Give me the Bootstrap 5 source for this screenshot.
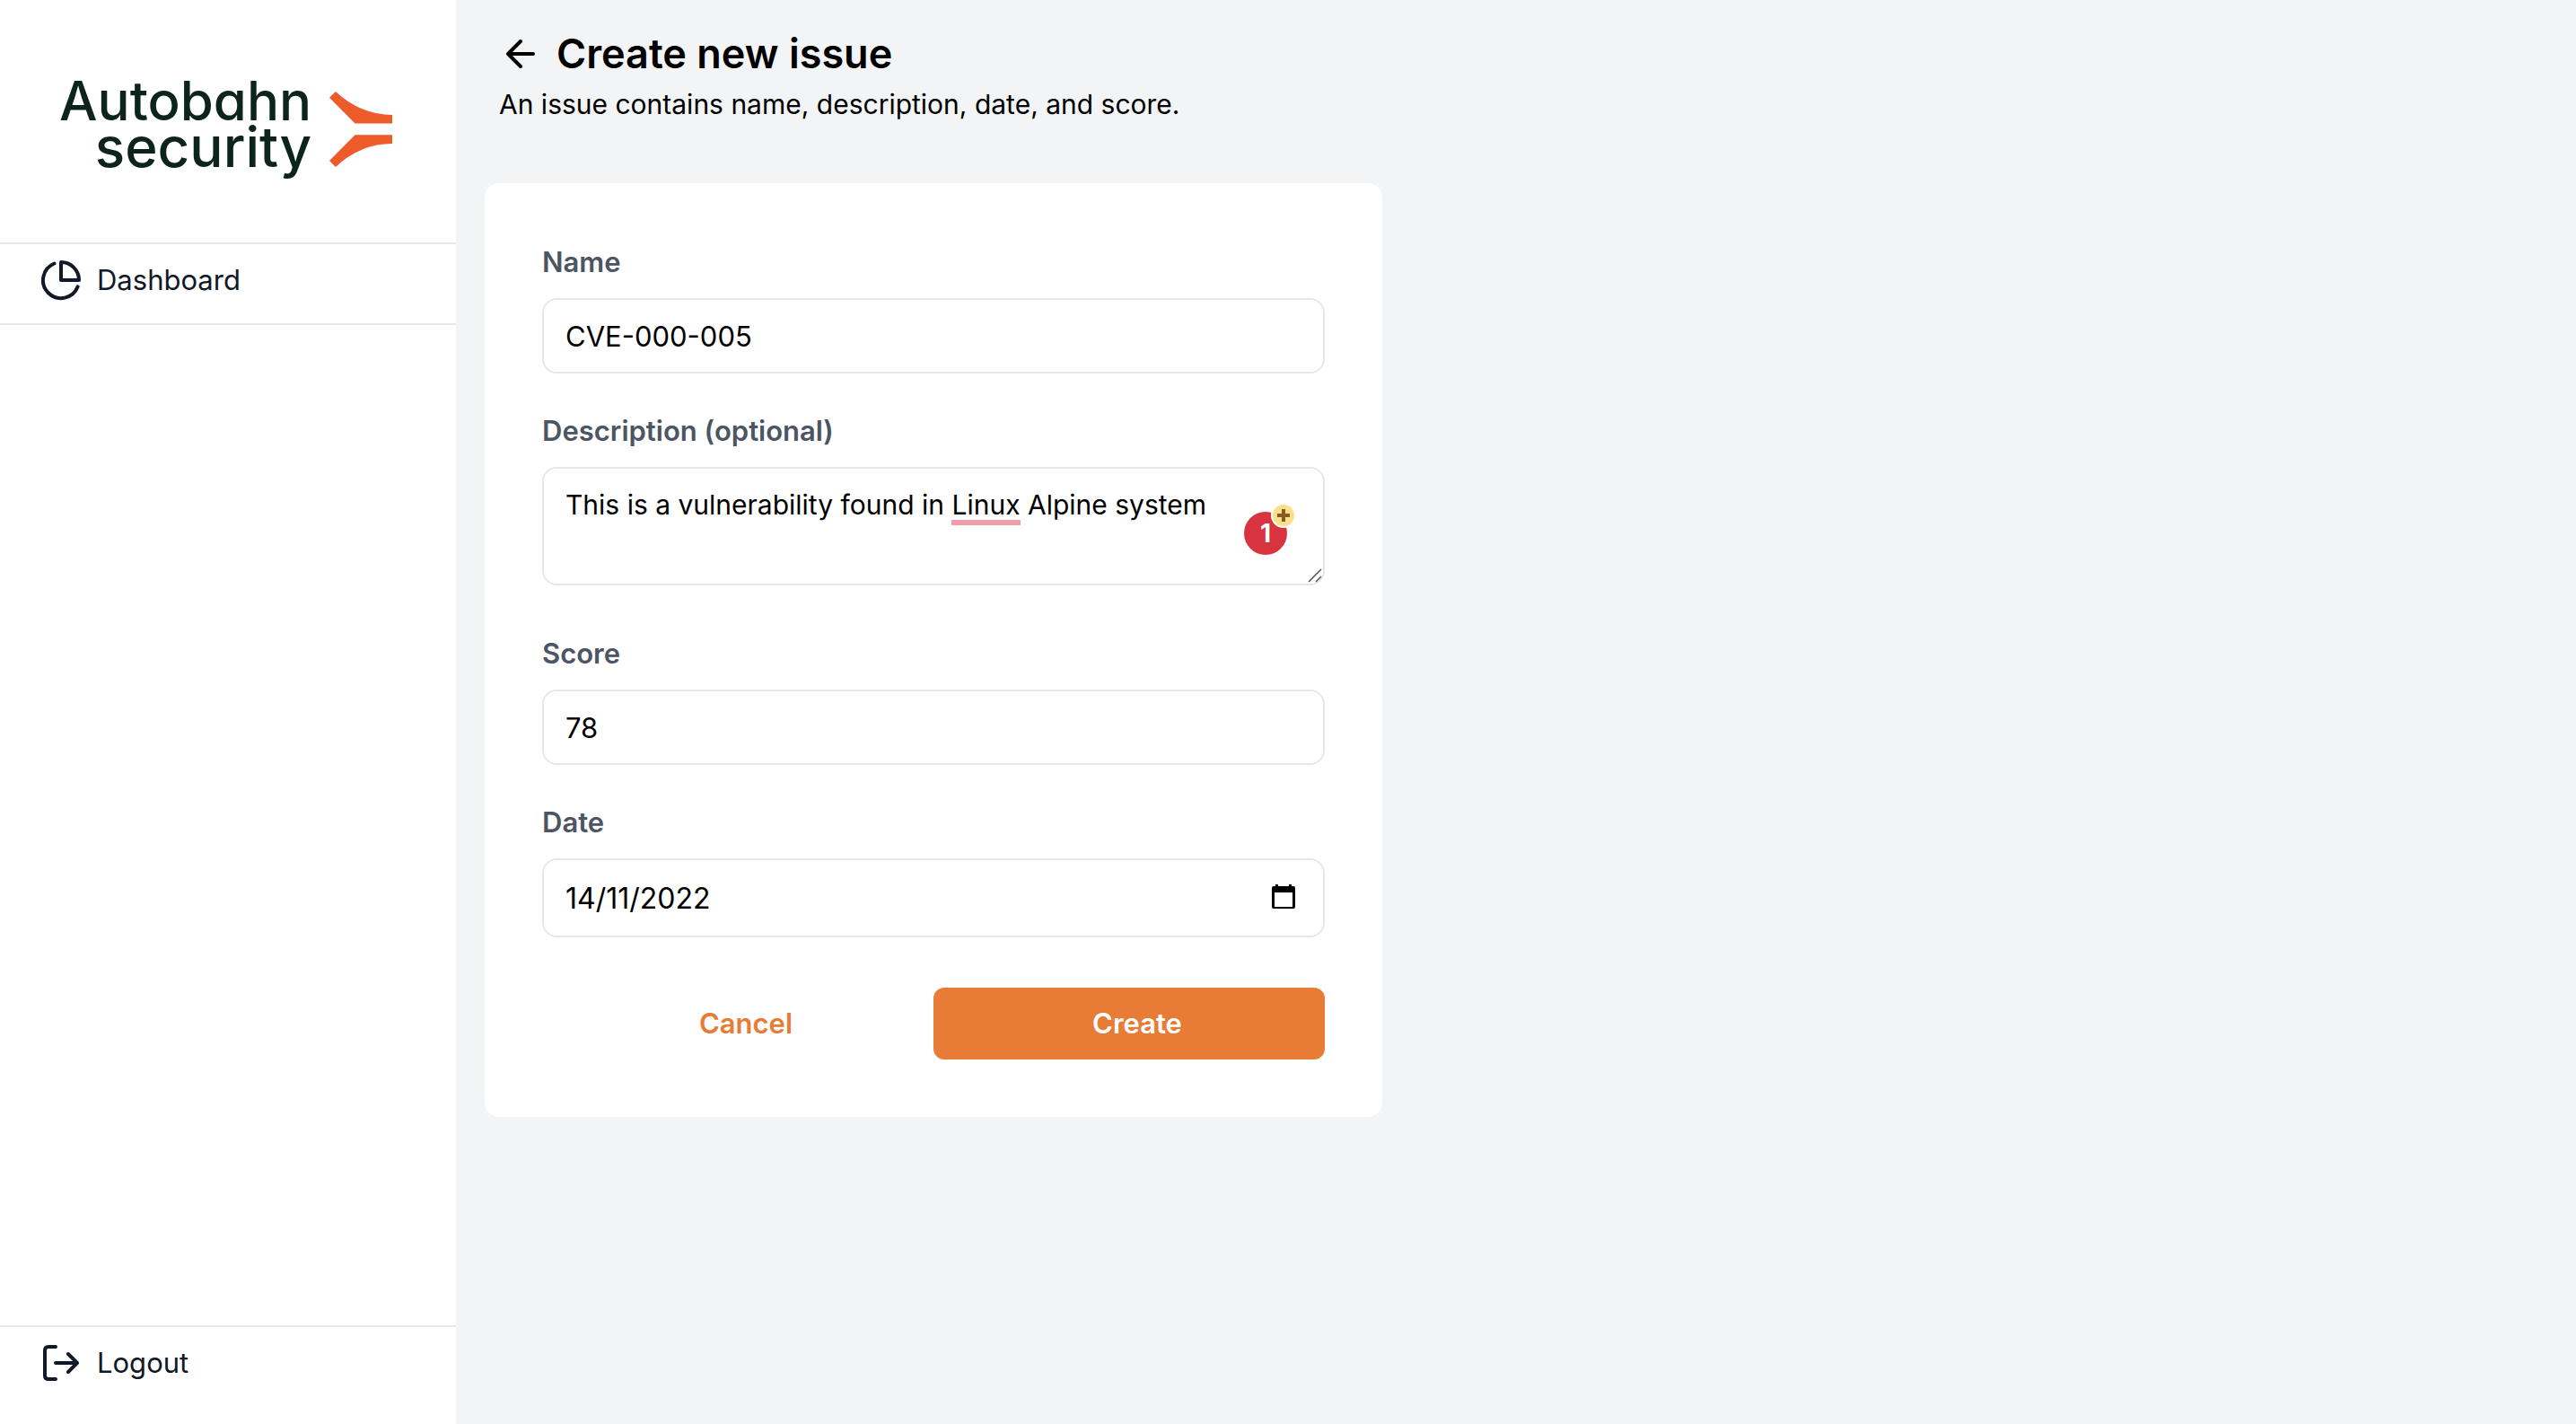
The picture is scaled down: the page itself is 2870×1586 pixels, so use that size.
<!DOCTYPE html>
<html lang="en">
<head>
<meta charset="utf-8">
<meta name="viewport" content="width=device-width, initial-scale=1">
<title>Create new issue</title>
<link href="https://cdn.jsdelivr.net/npm/bootstrap@5.3.0/dist/css/bootstrap.min.css" rel="stylesheet">
<style>
  body { font-family: Inter, "Liberation Sans", sans-serif; font-size: 31px; line-height: 48px; color: #000; background: #f3f4f6; }
  .side { flex: 0 0 508px; background: #fff; }
  .brand { height: 270px; padding: 86px 0 0 66px; gap: 20px; color: #0c241b; text-decoration: none; }
  .brand-name { font-size: 60px; line-height: 52px; font-weight: 500; font-feature-settings: "cv11"; }
  .brand-name span { display: block; }
  .brand-name span + span { font-size: 62px; }
  .brand svg { margin-top: 16px; }
  .side-link { display: flex; align-items: center; gap: 16px; padding: 16px 44px 24px; color: #111827; text-decoration: none; }
  .rule-top { border-top: 2px solid #e5e7eb; }
  .rule-bottom { border-bottom: 2px solid #e5e7eb; }
  .side-foot { padding-bottom: 20px; }
  .content { padding: 28px 32px; }
  .head { padding: 0 16px; margin-bottom: 64px; }
  .head h1 { font-size: 45px; line-height: 64px; font-weight: 600; }
  .head p { font-size: 30px; }
  .panel { max-width: 1000px; padding: 64px; background: #fff; border-radius: 16px; }
  .field { margin-bottom: 40px; }
  .field .form-label { display: block; margin: 0 0 16px; font-weight: 600; color: #4b5563; }
  .field .form-control { padding: 16px 24px; font-size: 31px; line-height: 48px; color: #000; border: 2px solid #e5e7eb; border-radius: 16px; height: 84px; }
  .field textarea.form-control { height: 132px; font-size: 30px; resize: none; overflow: hidden; }
  .field-area { margin-bottom: 52px; }
  .field-date { margin-bottom: 56px; }
  .field-date .form-control { height: 88px; font-size: 32px; }
  .spell { position: absolute; left: 456px; top: 59px; width: 77px; height: 6px; background: #f29cab; }
  .checker { position: absolute; right: 42px; top: 50px; width: 48px; height: 48px; padding: 0; border: 0; border-radius: 50%; background: #d8343f; color: #fff; font-size: 28px; line-height: 48px; font-weight: 700; }
  .checker svg { position: absolute; right: -10px; top: -10px; }
  .grip { position: absolute; right: 3px; bottom: 3px; }
  .picker { position: absolute; right: 32px; top: 28px; padding: 0; border: 0; background: none; line-height: 0; }
  .act { padding: 16px 16px 16px 34px; font-size: 31px; line-height: 48px; font-weight: 600; border: 0; border-radius: 12px; color: #e87b35; }
  .act-main, .act-main:hover { background: #e87b35; color: #fff; }
</style>
<script src="https://cdn.jsdelivr.net/npm/bootstrap@5.3.0/dist/js/bootstrap.bundle.min.js"></script>
</head>
<body>
<div class="d-flex min-vh-100">
  <aside class="side d-flex flex-column">
    <a href="#" class="brand d-flex align-items-start">
      <span class="brand-name text-end"><span>Autobahn</span><span>security</span></span>
      <svg width="70" height="84" viewBox="980 95 211 253" fill="#ee5b2b" aria-hidden="true">
        <path d="M1001 95Q1085 173 1191 173V202H1066L980 115Z"/>
        <path d="M1001 348Q1085 270 1191 270V240H1066L980 327Z"/>
      </svg>
    </a>
    <nav class="rule-top rule-bottom">
      <a href="#" class="side-link">
        <svg width="48" height="48" viewBox="0 0 48 48" fill="none" stroke="currentColor" stroke-width="4" stroke-linecap="round" stroke-linejoin="round" aria-hidden="true">
          <path d="M24 4V24H44A20 20 0 0 0 24 4Z"/>
          <path d="M16.500 5.500A20 20 0 1 0 42.600 31.300"/>
        </svg>
        <span>Dashboard</span>
      </a>
    </nav>
    <div class="rule-top side-foot mt-auto">
      <a href="#" class="side-link">
        <svg width="48" height="48" viewBox="0 0 48 48" fill="none" stroke="currentColor" stroke-width="4" stroke-linecap="round" stroke-linejoin="round" aria-hidden="true">
          <path d="M18 6H10Q6 6 6 10V38Q6 42 10 42H18"/>
          <path d="M18 24H42M32 14L42 24L32 34"/>
        </svg>
        <span>Logout</span>
      </a>
    </div>
  </aside>

  <main class="content flex-grow-1">
    <header class="head">
      <div class="d-flex align-items-center gap-3">
        <a href="#" class="d-flex text-black" aria-label="Back">
          <svg width="48" height="48" viewBox="0 0 48 48" fill="none" stroke="currentColor" stroke-width="4" stroke-linecap="round" stroke-linejoin="round" aria-hidden="true">
            <path d="M38 24H10M24 10L10 24L24 38"/>
          </svg>
        </a>
        <h1 class="m-0">Create new issue</h1>
      </div>
      <p class="m-0">An issue contains name, description, date, and score.</p>
    </header>

    <form class="panel">
      <div class="field">
        <label class="form-label" for="name">Name</label>
        <input class="form-control" id="name" type="text" value="CVE-000-005">
      </div>
      <div class="field field-area">
        <label class="form-label" for="description">Description (optional)</label>
        <div class="position-relative">
          <textarea class="form-control" id="description" spellcheck="false">This is a vulnerability found in Linux Alpine system</textarea>
          <span class="spell"></span>
          <button class="checker" type="button">1
            <svg width="28" height="28" viewBox="0 0 28 28" aria-hidden="true">
              <circle cx="14" cy="14" r="14" fill="#fff"/>
              <circle cx="14" cy="14" r="12" fill="#fbdf8b"/>
              <path d="M14 7V21M7 14H21" stroke="#8a5a20" stroke-width="4"/>
            </svg>
          </button>
          <svg class="grip" width="16" height="16" viewBox="0 0 16 16" stroke="#555" stroke-width="1.500" aria-hidden="true">
            <path d="M1 15L15 1M9 15L15 9"/>
          </svg>
        </div>
      </div>
      <div class="field">
        <label class="form-label" for="score">Score</label>
        <input class="form-control" id="score" type="text" inputmode="numeric" value="78">
      </div>
      <div class="field field-date">
        <label class="form-label" for="date">Date</label>
        <div class="position-relative">
          <input class="form-control" id="date" type="text" value="14/11/2022">
          <button class="picker" type="button" aria-label="Open calendar">
            <svg width="28" height="30" viewBox="0 0 28 30" aria-hidden="true">
              <path d="M5 1H8V3H20V1H23V3H25Q27 3 27 5V26Q27 28 25 28H3Q1 28 1 26V5Q1 3 3 3H5ZM4 10V26H24V10Z" fill-rule="evenodd"/>
            </svg>
          </button>
        </div>
      </div>
      <div class="row g-0">
        <div class="col-6"><button class="btn act w-100" type="button">Cancel</button></div>
        <div class="col-6"><button class="btn act act-main w-100" type="submit">Create</button></div>
      </div>
    </form>
  </main>
</div>
</body>
</html>
